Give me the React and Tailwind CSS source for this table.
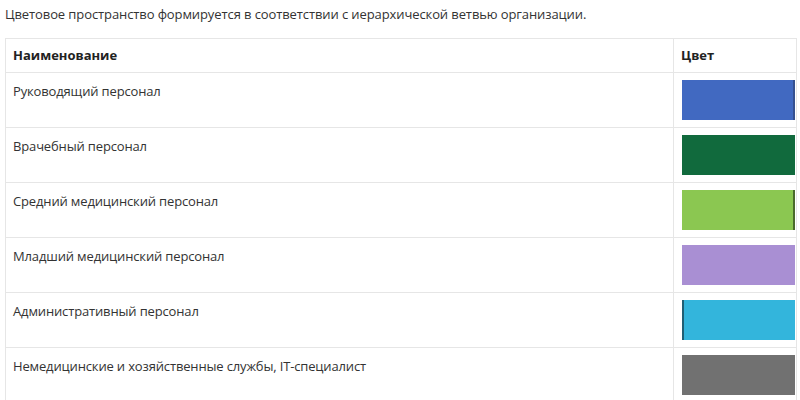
import React from "react";

const rows = [
  { name: "Руководящий персонал", color: "bg-[#4169c1]", edge: "border-r-2 border-[#35508f]" },
  { name: "Врачебный персонал", color: "bg-[#116a3d]", edge: "" },
  { name: "Средний медицинский персонал", color: "bg-[#8bc751]", edge: "border-r-2 border-[#4a6a2c]" },
  { name: "Младший медицинский персонал", color: "bg-[#a98fd3]", edge: "" },
  { name: "Административный персонал", color: "bg-[#33b5dc]", edge: "border-l-2 border-[#1f5f74]" },
  { name: "Немедицинские и хозяйственные службы, IT-специалист", color: "bg-[#717171]", edge: "" },
];

export default function App() {
  return (
    <div className="w-[800px] h-[400px] overflow-hidden bg-white text-[#333] font-['Open_Sans',sans-serif] text-[13px]">
      <p className="pl-[5px] pt-[5px] h-[38px] tracking-[-0.1px]">
        Цветовое пространство формируется в соответствии с иерархической ветвью организации.
      </p>
      <table className="ml-[5px] w-[792px] border-collapse">
        <thead>
          <tr className="h-[34px]">
            <th className="border border-[#e6e6e6] text-left font-bold text-[#222] pl-[7px] pt-[1px]">Наименование</th>
            <th className="border border-[#e6e6e6] text-left font-bold text-[#222] pl-[7px] w-[123px] pt-[1px]">Цвет</th>
          </tr>
        </thead>
        <tbody>
          {rows.map((r) => (
            <tr key={r.name} className="h-[55px]">
              <td className="border border-[#e6e6e6] pl-[7px] align-top pt-[9px] tracking-[-0.15px]">{r.name}</td>
              <td className="border border-[#e6e6e6] pl-[8px] align-top pt-[7px]">
                <div className={`w-[113px] h-[40px] ${r.color} ${r.edge}`}></div>
              </td>
            </tr>
          ))}
        </tbody>
      </table>
    </div>
  );
}
